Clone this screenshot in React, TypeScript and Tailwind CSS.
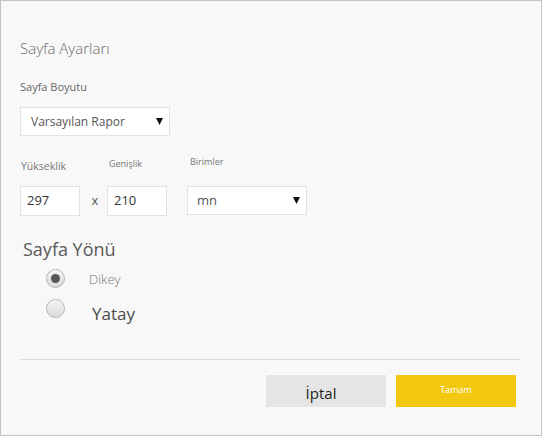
import React from "react";

// Page setup dialog: size, dimensions, units and orientation.

const font = { fontFamily: '"Open Sans", "Noto Sans", sans-serif' };

function Caret() {
  return (
    <svg width="7" height="7" viewBox="0 0 7 7" className="shrink-0">
      <polygon points="0,0 7,0 3.5,7" fill="#111" />
    </svg>
  );
}

function Radio({ checked }: { checked?: boolean }) {
  return (
    <div className="w-[19px] h-[19px] shrink-0 rounded-full border border-[#b4b4b4] bg-gradient-to-b from-[#f2f2f2] to-[#dcdcdc] flex items-center justify-center shadow-[inset_0_1px_1px_rgba(255,255,255,0.8)]">
      {checked && <div className="w-[9px] h-[9px] rounded-full bg-[#555]" />}
    </div>
  );
}

export default function App() {
  return (
    <div
      style={font}
      className="w-[542px] h-[436px] border border-[#c4c4c4] bg-[#f8f8f8] flex flex-col px-[19px]"
    >
      {/* Title */}
      <div className="pt-[37px] text-[15px] leading-[20px] font-light text-[#6a6a6a]">Sayfa Ayarları</div>

      {/* Page size */}
      <div className="mt-[22px] text-[11px] leading-[14px] text-[#666]">Sayfa Boyutu</div>
      <div className="mt-[13px] w-[150px] h-[29px] bg-white border border-[#e2e2e2] flex items-center justify-between pl-[10px] pr-[6px]">
        <span className="text-[12px] text-[#555]">Varsayılan Rapor</span>
        <Caret />
      </div>

      {/* Dimensions */}
      <div className="mt-[20px] flex">
        <div className="w-[60px] flex flex-col">
          <div className="pl-[1px] text-[10.5px] leading-[14px] text-[#777] mt-[3px]">Yükseklik</div>
          <div className="mt-[13px] h-[30px] bg-white border border-[#e2e2e2] flex items-center pl-[6px] text-[13px] text-[#333]">297</div>
        </div>
        <div className="w-[27px] flex items-end justify-center pb-[6px] pl-[3px] text-[13px] text-[#555]">x</div>
        <div className="w-[60px] flex flex-col">
          <div className="pl-[2px] text-[9px] leading-[12px] text-[#777] mt-[2px]">Genişlik</div>
          <div className="mt-[16px] h-[30px] bg-white border border-[#e2e2e2] flex items-center pl-[6px] text-[13px] text-[#333]">210</div>
        </div>
        <div className="w-[120px] ml-[20px] flex flex-col">
          <div className="pl-[3px] text-[9px] leading-[12px] text-[#777]">Birimler</div>
          <div className="mt-[18px] h-[29px] bg-white border border-[#e2e2e2] flex items-center justify-between pl-[9px] pr-[6px]">
            <span className="text-[13px] text-[#555]">mn</span>
            <Caret />
          </div>
        </div>
      </div>

      {/* Orientation */}
      <div className="mt-[21px] pl-[3px] text-[18px] leading-[24px] text-[#5a5a5a]">Sayfa Yönü</div>
      <div className="mt-[7px] h-[20px] pl-[26px] flex items-center">
        <Radio checked />
        <span className="ml-[24px] mt-[2px] text-[13px] leading-[18px] font-light text-[#777]">Dikey</span>
      </div>
      <div className="mt-[10px] h-[20px] pl-[26px] flex items-center">
        <Radio />
        <span className="ml-[27px] mt-[12px] text-[17px] leading-[22px] text-[#4a4a4a]">Yatay</span>
      </div>

      {/* Footer */}
      <div className="mt-auto mb-[28px]">
        <div className="w-[500px] h-px bg-[#dcdcdc]" />
        <div className="w-[500px] mt-[15px] flex justify-end gap-[10px] pr-[4px]">
          <button className="w-[120px] h-[32px] bg-[#e5e5e5] text-[15px] text-[#222] flex items-center justify-center pt-[4px] pr-[10px]">
            İptal
          </button>
          <button className="w-[120px] h-[32px] bg-[#f2c811] text-[9px] text-white flex items-center justify-center pb-[2px]">
            Tamam
          </button>
        </div>
      </div>
    </div>
  );
}
